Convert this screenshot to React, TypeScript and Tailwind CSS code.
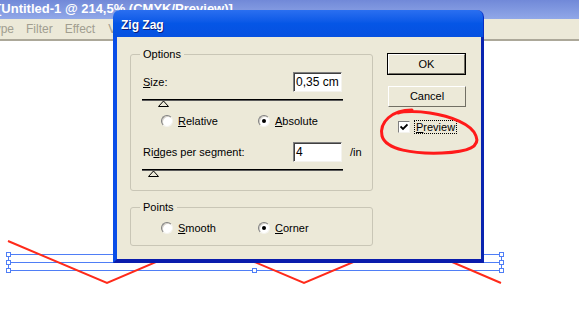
import React from "react";

const font = { fontFamily: '"Liberation Sans", Arial, sans-serif' };

const Radio = ({ checked }: { checked?: boolean }) => (
  <span className="flex h-[12px] w-[12px] items-center justify-center rounded-full border border-t-[#7f7f7f] border-l-[#7f7f7f] border-b-[#f4f3ee] border-r-[#f4f3ee] bg-white shadow-[inset_1px_1px_0_#d4d0c8]">
    {checked && <span className="h-[4px] w-[4px] rounded-full bg-black" />}
  </span>
);

const Option = ({
  label,
  hot,
  checked,
  className,
}: {
  label: string;
  hot: number;
  checked?: boolean;
  className?: string;
}) => (
  <div className={"flex items-center gap-[5px] " + (className ?? "")}>
    <Radio checked={checked} />
    <span>
      {label.slice(0, hot)}
      <u>{label[hot]}</u>
      {label.slice(hot + 1)}
    </span>
  </div>
);

const Slider = ({ at }: { at: number }) => (
  <div className="ml-[11px] mt-[7px] flex w-[201px] flex-col">
    <div className="h-[2px] border-t border-black border-b border-b-[#5a5a5a]" />
    <svg width="11" height="7" className="mt-[-1px]" style={{ marginLeft: at }}>
      <path d="M0.5 6.5 L5.5 1 L10.5 6.5 Z" fill="#ece9d8" stroke="#000" strokeWidth="1" />
    </svg>
  </div>
);

const Field = ({ value }: { value: string }) => (
  <div className="flex h-[20px] w-[49px] items-center border border-t-[#7f7f7f] border-l-[#7f7f7f] border-b-[#f4f3ee] border-r-[#f4f3ee] bg-white pl-[2px] text-[12px] shadow-[inset_1px_1px_0_#404040]">
    {value}
  </div>
);

const App = () => {
  return (
    <div
      className="relative h-[317px] w-[579px] overflow-hidden bg-white text-[11px] text-black"
      style={font}
    >
      {/* illustrator window chrome */}
      <div className="flex h-[19px] items-center bg-gradient-to-b from-[#7189d8] to-[#91a8e8] pb-[2px] text-[13px] font-bold text-white">
        <span className="ml-[-3px] whitespace-nowrap">[Untitled-1 @ 214,5% (CMYK/Preview)]</span>
      </div>
      <div className="flex h-[22px] items-center border-b-2 border-b-[#aca899] bg-[#ece9d8] text-[12px] text-[#a19e90]">
        <span className="ml-[-12px]">Type</span>
        <span className="ml-[12px]">Filter</span>
        <span className="ml-[12px]">Effect</span>
        <span className="ml-[13px]">View</span>
      </div>

      {/* artwork */}
      <svg className="absolute left-0 top-0" width="579" height="317">
        <g stroke="#4f7ef6" strokeWidth="1" fill="none" shapeRendering="crispEdges">
          <rect x="8.5" y="254.5" width="493" height="16" />
          <line x1="8" y1="262.5" x2="501" y2="262.5" />
          {[
            [8, 254],
            [8, 262],
            [8, 270],
            [501, 254],
            [501, 262],
            [501, 270],
            [254, 270],
          ].map(([x, y]) => (
            <rect key={x + "-" + y} x={x - 2 + 0.5} y={y - 2 + 0.5} width="4" height="4" fill="#fff" />
          ))}
        </g>
        <polyline
          points="8,241 107,283 205,241 304,283 403,241 501,283"
          fill="none"
          stroke="#ff2a1a"
          strokeWidth="2"
        />
      </svg>

      {/* dialog */}
      <div className="absolute left-[113px] top-[10px] flex h-[253px] w-[371px] flex-col">
        <div className="flex h-[27px] items-center rounded-t-[7px] border-r border-r-[#0a2fc4] bg-gradient-to-b from-[#2a6ff0] via-[#0556e6] to-[#0650e0] pl-[8px] pt-[3px] text-[12px] font-bold text-white [text-shadow:1px_1px_0_#0a1f7a]">
          Zig Zag
        </div>
        <div className="flex flex-1 border-l-[4px] border-r-[3px] border-b-[4px] border-l-[#0a4ee8] border-r-[#0a24b0] border-b-[#0a1cac] bg-[#ece9d8]">
          <div className="ml-[13px] mt-[11px] flex w-[243px] flex-col gap-[10px]">
            <fieldset className="h-[143px] rounded-[3px] border border-[#c9c6b6]">
              <legend className="ml-[9px] px-[3px] leading-[13px]">Options</legend>
              <div className="mt-[11px] flex h-[20px] items-center pl-[12px]">
                <span className="flex-1">
                  <u>S</u>ize:
                </span>
                <Field value="0,35 cm" />
                <span className="w-[30px]" />
              </div>
              <Slider at={16} />
              <div className="mt-[7px] flex h-[14px] items-center pl-[30px]">
                <Option label="Relative" hot={0} className="w-[97px]" />
                <Option label="Absolute" hot={0} checked />
              </div>
              <div className="mt-[14px] flex h-[20px] items-center pl-[12px]">
                <span className="flex-1">
                  Ri<u>d</u>ges per segment:
                </span>
                <Field value="4" />
                <span className="w-[30px] pl-[8px]">/in</span>
              </div>
              <Slider at={6} />
            </fieldset>
            <fieldset className="h-[45px] rounded-[3px] border border-[#c9c6b6]">
              <legend className="ml-[9px] px-[3px] leading-[13px]">Points</legend>
              <div className="mt-[7px] flex h-[14px] items-center pl-[30px]">
                <Option label="Smooth" hot={0} className="w-[97px]" />
                <Option label="Corner" hot={0} checked />
              </div>
            </fieldset>
          </div>
          <div className="ml-[14px] mt-[16px] flex w-[79px] flex-col">
            <button className="flex h-[22px] items-center justify-center border border-black bg-[#ece9d8]">
              <span className="flex h-full w-full items-center justify-center border border-t-white border-l-white border-b-[#716f64] border-r-[#716f64]">
                OK
              </span>
            </button>
            <button className="mt-[11px] ml-[1px] flex h-[21px] w-[78px] items-center justify-center border border-t-white border-l-white border-b-[#716f64] border-r-[#716f64] bg-[#ece9d8]">
              Cancel
            </button>
            <div className="mt-[13px] ml-[11px] flex items-center gap-[4px]">
              <span className="flex h-[12px] w-[12px] items-center justify-center border border-t-[#7f7f7f] border-l-[#7f7f7f] border-b-[#f4f3ee] border-r-[#f4f3ee] bg-white">
                <svg width="8" height="8" viewBox="0 0 8 8">
                  <path d="M0.5 3.5 L3 6 L7.5 1.5" fill="none" stroke="#000" strokeWidth="1.8" />
                </svg>
              </span>
              <span className="border border-dotted border-black px-[1px] leading-[12px]">
                <u>P</u>review
              </span>
            </div>
          </div>
        </div>
      </div>

      {/* hand-drawn annotation */}
      <svg className="absolute left-0 top-0" width="579" height="317">
        <path
          d="M412 110 C392 110 379 122 382 136 C386 150 414 154 442 153 C470 152 480 146 476 136 C472 124 450 116 430 113 C418 111 404 111 398 113"
          fill="none"
          stroke="#ff1a1a"
          strokeWidth="3"
          strokeLinecap="round"
        />
      </svg>
    </div>
  );
};

export default App;
